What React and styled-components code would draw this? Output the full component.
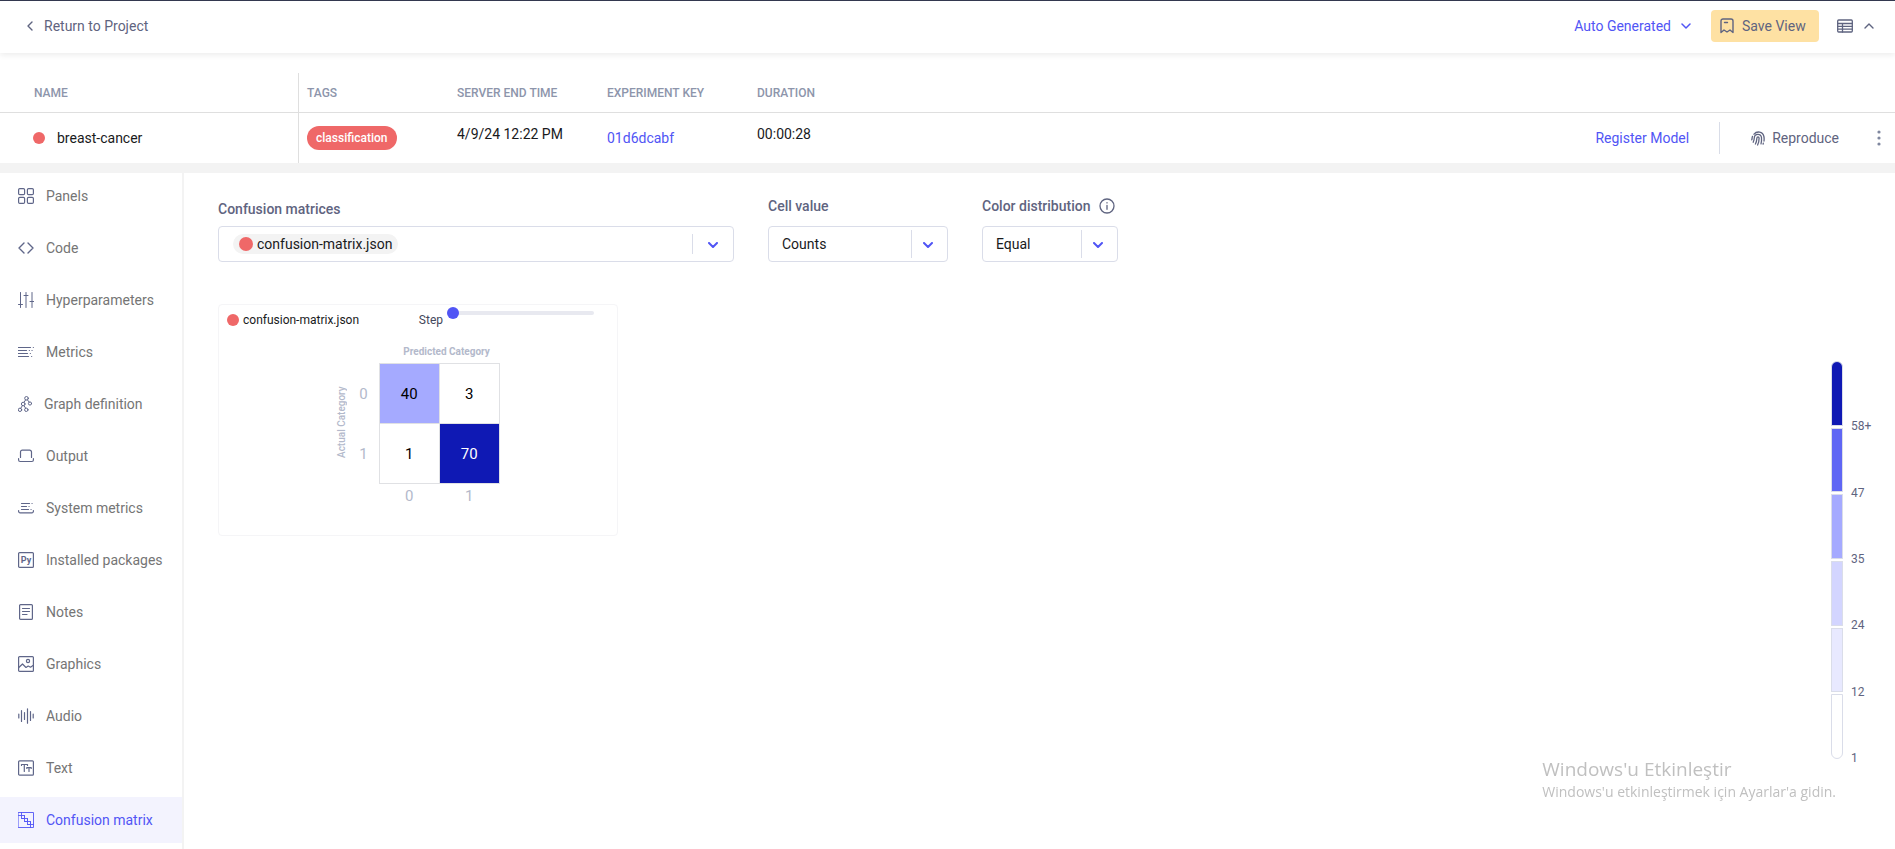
import { useState } from 'react';
import styled, { createGlobalStyle, css } from 'styled-components';

const GlobalStyle = createGlobalStyle`
  * {
    box-sizing: border-box;
  }
  body {
    margin: 0;
    background: #ffffff;
    color: #191a1c;
    font-family: Roboto, 'Liberation Sans', sans-serif;
    font-size: 14px;
    line-height: 20px;
  }
  button, input, select {
    font: inherit;
    color: inherit;
  }
`;

const Page = styled.div`
  display: flex;
  flex-direction: column;
  min-height: 100vh;
`;

const TopBar = styled.header`
  display: flex;
  justify-content: space-between;
  align-items: center;
  height: 53px;
  padding: 0 21px 2px 27px;
  border-top: 1px solid #33384f;
  box-shadow: 0 2px 6px rgba(0, 0, 0, 0.08);
`;

const BackLink = styled.a`
  display: flex;
  align-items: center;
  gap: 11px;
  color: #5f6480;
  text-decoration: none;
`;

const TopActions = styled.div`
  display: flex;
  align-items: center;
`;

const PlainButton = styled.button`
  display: flex;
  align-items: center;
  gap: ${({ $gap }) => $gap || 8}px;
  padding: 0;
  border: none;
  background: none;
  color: ${({ $primary }) => ($primary ? '#5155f5' : '#5f6480')};
  cursor: pointer;
`;

const SaveButton = styled(PlainButton)`
  height: 32px;
  min-width: 108px;
  margin: 0 18px 0 20px;
  padding: 0 12px 0 9px;
  border-radius: 4px;
  background: #fee1a3;
`;

const TableWrap = styled.div`
  padding-top: 20px;
  border-bottom: 10px solid #f3f3f3;
`;

const Table = styled.table`
  width: 100%;
  table-layout: fixed;
  border-collapse: separate;
  border-spacing: 0;
`;

const HeadCell = styled.th`
  width: ${({ $width }) => $width || 'auto'};
  height: 40px;
  padding: 0 8px;
  border-bottom: 1px solid #dfdfdf;
  color: #8d95ab;
  font-size: 12px;
  font-weight: 500;
  text-align: left;
  text-transform: uppercase;
  &:first-child {
    padding-left: 34px;
    border-right: 1px solid #dfdfdf;
  }
`;

const Cell = styled.td`
  height: 50px;
  padding: ${({ $top }) => ($top ? '11px 8px' : '0 8px')};
  vertical-align: ${({ $top }) => ($top ? 'top' : 'middle')};
  &:first-child {
    padding-left: 33px;
    border-right: 1px solid #dfdfdf;
  }
`;

const Inline = styled.div`
  display: flex;
  align-items: center;
  gap: ${({ $gap }) => $gap}px;
`;

const Dot = styled.span`
  flex: none;
  width: ${({ $size }) => $size || 12}px;
  height: ${({ $size }) => $size || 12}px;
  border-radius: 50%;
  background: #ef6868;
`;

const Tag = styled.span`
  display: inline-block;
  padding: 0 9px;
  border-radius: 12px;
  background: #ef6868;
  color: #ffffff;
  font-size: 12px;
  font-weight: 500;
  line-height: 24px;
  vertical-align: middle;
`;

const KeyLink = styled.a`
  color: #5155f5;
  text-decoration: none;
`;

const RowActions = styled.div`
  display: flex;
  justify-content: flex-end;
  align-items: center;
  padding-right: 6px;
`;

const Separator = styled.span`
  width: 1px;
  height: 32px;
  margin: 0 31px 0 30px;
  background: #d9dde8;
`;

const MoreButton = styled(PlainButton)`
  margin-left: 38px;
`;

const Body = styled.div`
  display: flex;
  flex: 1;
`;

const Sidebar = styled.nav`
  flex: none;
  display: flex;
  flex-direction: column;
  gap: 6px;
  width: 184px;
  border-right: 2px solid #f3f3f3;
`;

const NavItem = styled.a`
  display: flex;
  align-items: center;
  gap: 12px;
  height: 46px;
  padding-left: 18px;
  color: #757575;
  text-decoration: none;
  white-space: nowrap;
  svg {
    flex: none;
    color: #5f6689;
  }
  ${({ $active }) =>
    $active &&
    css`
      background: #f3f3fe;
      color: #5155f5;
      svg {
        color: #5155f5;
      }
    `}
`;

const Main = styled.main`
  flex: 1;
  min-width: 0;
  padding: 23px 34px 0;
`;

const Filters = styled.div`
  display: flex;
  align-items: flex-end;
  gap: 34px;
`;

const Field = styled.div`
  flex: 0 1 ${({ $width }) => $width}px;
  display: flex;
  flex-direction: column;
  gap: ${({ $tight }) => ($tight ? 7 : 10)}px;
`;

const Label = styled.label`
  display: flex;
  align-items: center;
  gap: 8px;
  color: #5f6480;
  font-weight: 500;
  white-space: nowrap;
`;

const controlBox = css`
  width: 100%;
  height: 36px;
  border: 1px solid #dadde9;
  border-radius: 4px;
  background: #ffffff;
  cursor: pointer;
`;

const MultiSelect = styled.button`
  ${controlBox}
  display: flex;
  align-items: center;
  justify-content: space-between;
  padding: 0 0 0 14px;
`;

const Chip = styled.span`
  display: flex;
  align-items: center;
  gap: 4px;
  padding: 0 6px;
  border-radius: 10px;
  background: #f3f3f3;
`;

const SelectBox = styled.div`
  display: grid;
  align-items: center;
  > * {
    grid-area: 1 / 1;
  }
`;

const NativeSelect = styled.select`
  ${controlBox}
  appearance: none;
  padding: 0 50px 1px 13px;
`;

const Indicator = styled.span`
  display: flex;
  justify-content: center;
  align-items: center;
  justify-self: end;
  width: ${({ $wide }) => ($wide ? 41 : 37)}px;
  height: ${({ $wide }) => ($wide ? 20 : 28)}px;
  padding: ${({ $wide }) => ($wide ? '2px 0 0' : '2px 4px 0 0')};
  border-left: 1px solid #dadde9;
  color: #5155f5;
  pointer-events: none;
`;

const Card = styled.section`
  max-width: 400px;
  margin-top: 42px;
  padding: 2px 8px 26px;
  border: 1px solid #f5f5f7;
  border-radius: 4px;
`;

const CardHead = styled.div`
  display: flex;
  justify-content: space-between;
  align-items: flex-start;
  padding-right: 15px;
  font-size: 12px;
  line-height: 26px;
`;

const StepLabel = styled.label`
  display: flex;
  align-items: flex-start;
  gap: 4px;
  color: #44485c;
`;

const Slider = styled.input`
  appearance: none;
  width: 147px;
  height: 12px;
  margin: 0;
  background: none;
  &::-webkit-slider-runnable-track {
    height: 4px;
    border-radius: 2px;
    background: #e8e9f0;
  }
  &::-webkit-slider-thumb {
    appearance: none;
    width: 12px;
    height: 12px;
    margin-top: -4px;
    border-radius: 50%;
    background: #5155f5;
  }
`;

const Plot = styled.div`
  display: flex;
  justify-content: center;
  margin-top: 13px;
  color: #b3b9cb;
`;

const ActualLabel = styled.div`
  height: 120px;
  margin-top: 16px;
  font-size: 10px;
  font-weight: 500;
  line-height: 12px;
  text-align: center;
  writing-mode: vertical-rl;
  transform: rotate(180deg);
`;

const Matrix = styled.table`
  border-collapse: collapse;
  font-size: 15px;
  text-align: center;
  caption {
    padding: 0 0 5px 55px;
    font-size: 10px;
    font-weight: 700;
    line-height: 12px;
    text-align: left;
  }
  th {
    padding: 0;
    font-weight: 400;
  }
  tbody th {
    width: 31px;
  }
  tfoot th {
    height: 25px;
  }
`;

const MatrixCell = styled.td`
  width: 60px;
  height: 60px;
  padding: 0;
  border: 1px solid #e0e1e4;
  background: ${({ $bg }) => $bg};
  color: ${({ $light }) => ($light ? '#ffffff' : '#000000')};
`;

const Legend = styled.aside`
  flex: none;
  display: flex;
  gap: 8px;
  width: 64px;
  height: 398px;
  margin-top: 188px;
  color: #5f6480;
  font-size: 12px;
  line-height: 14px;
`;

const LegendBar = styled.div`
  display: flex;
  flex-direction: column;
  gap: 2px;
  width: 12px;
`;

const LegendStep = styled.div`
  flex: 1;
  border: 1px solid #dadde9;
  background: ${({ $color }) => $color};
  &:first-child {
    border-radius: 6px 6px 0 0;
  }
  &:last-child {
    border-radius: 0 0 6px 6px;
  }
`;

const LegendLabels = styled.div`
  display: flex;
  flex-direction: column;
  height: 398px;
  margin-top: 6px;
`;

const LegendLabel = styled.span`
  flex: 1;
  display: flex;
  align-items: flex-end;
`;

const Watermark = styled.div`
  position: fixed;
  right: 59px;
  bottom: 47px;
  color: #c0c0c0;
  font-family: 'Open Sans', 'Noto Sans', sans-serif;
  font-size: 14px;
  line-height: 20px;
  pointer-events: none;
  strong {
    display: block;
    font-size: 19px;
    font-weight: 400;
    line-height: 26px;
  }
`;

const Svg = ({ w = 16, h = 16, sw = 1.2, children }) => (
  <svg
    width={w}
    height={h}
    viewBox={`0 0 ${w} ${h}`}
    fill="none"
    stroke="currentColor"
    strokeWidth={sw}
    strokeLinecap="round"
    strokeLinejoin="round"
    aria-hidden="true"
  >
    {children}
  </svg>
);

const ChevronDown = ({ sw = 1.5 }) => (
  <Svg w={10} h={6} sw={sw}>
    <path d="M1 1l4 4 4-4" />
  </Svg>
);

const icons = {
  panels: (
    <Svg>
      <rect x="0.6" y="0.6" width="6" height="6" rx="1.2" />
      <rect x="9.4" y="0.6" width="6" height="6" rx="1.2" />
      <rect x="0.6" y="9.4" width="6" height="6" rx="1.2" />
      <rect x="9.4" y="9.4" width="6" height="6" rx="1.2" />
    </Svg>
  ),
  code: (
    <Svg sw={1.4}>
      <path d="M6 3L1 8l5 5M10 3l5 5-5 5" />
    </Svg>
  ),
  sliders: (
    <Svg sw={1}>
      <path d="M2.5 .5v15M8 .5v15M14 .5v15M.5 12.5h4M6 3.5h4M12 9.5h4" />
    </Svg>
  ),
  metrics: (
    <Svg>
      <path d="M.5 3.5h12M15.3 3.5h.1M.5 6.5h8M11.3 6.5h.1M14 6.5h.1M.5 9.5h9M12.3 9.5h.1M.5 12.5h10M13.6 12.5h.1" />
    </Svg>
  ),
  graph: (
    <Svg w={14} sw={1}>
      <circle cx="8.5" cy="2.3" r="1.8" />
      <circle cx="5.2" cy="8" r="1.8" />
      <circle cx="12" cy="7.5" r="1.6" />
      <circle cx="2" cy="13.8" r="1.7" />
      <circle cx="8.3" cy="13.8" r="1.7" />
      <path d="M7.6 3.9L6 6.4M9.4 3.9l1.8 2.2M4.4 9.6l-1.6 2.6M6 9.6l1.6 2.6" />
    </Svg>
  ),
  output: (
    <Svg>
      <path d="M2.5 9.5V4a1.8 1.8 0 0 1 1.8-1.8h7.4A1.8 1.8 0 0 1 13.5 4v5.5M.6 10.5V12a1.5 1.5 0 0 0 1.5 1.5h11.8a1.5 1.5 0 0 0 1.5-1.5v-1.5" />
    </Svg>
  ),
  system: (
    <Svg>
      <path d="M3.5 3.5h8M14 3.5h.1M3.5 6.5h5M11 6.5h.1M3.5 9.5h7M13 9.5h.1M.6 10.5v.8a1.5 1.5 0 0 0 1.5 1.5h11.8a1.5 1.5 0 0 0 1.5-1.5v-.8" />
    </Svg>
  ),
  packages: (
    <Svg>
      <rect x="0.6" y="0.6" width="14.8" height="14.8" rx="1" />
      <text x="8" y="10.5" fontSize="9" fontWeight="700" textAnchor="middle" fill="currentColor" stroke="none">
        Py
      </text>
    </Svg>
  ),
  notes: (
    <Svg>
      <rect x="1.6" y="0.6" width="12.8" height="14.8" rx="1" />
      <path d="M4.5 4.5h7M4.5 7.5h7M4.5 10.5H9" />
    </Svg>
  ),
  graphics: (
    <Svg>
      <rect x="0.6" y="0.6" width="14.8" height="14.8" rx="1" />
      <circle cx="10" cy="5" r="1.6" />
      <path d="M.8 11.5L4.500 8 8 11.500l2.200-1.500 2.300 1.200L15 9.500" />
    </Svg>
  ),
  audio: (
    <Svg>
      <path d="M.8 6v4M3.5 2.5v11M6.5 4.5v7M9.5 .8v14.4M12.5 3.5v9M15.2 6v4" />
    </Svg>
  ),
  text: (
    <Svg>
      <rect x="0.6" y="0.8" width="14.8" height="14.4" rx="1" />
      <path d="M3.5 5.500v-1h6v1M6.300 4.500v7M8.800 8.500v-.9h4.400v.9M11 7.600v3.900" />
    </Svg>
  ),
  confusion: (
    <Svg sw={0.9}>
      <rect x="0.5" y="0.5" width="15" height="15" />
      <path d="M.5 3.5h6v3h3v3h3v3h3M3.5 .5v6h3v3h3v3h3v3M6.5 3.5v3h-3M9.5 6.5v3h-3M12.5 9.5v3h-3" />
    </Svg>
  ),
};

const Fingerprint = () => (
  <Svg w={14} h={15} sw={1.3}>
    <path d="M.8 8.800C1.200 7.600 1 6.500 1.500 5.300M3 3.200C5.800-.2 11.800.2 12.900 5.500c.3 1.500.3 3 .1 4.500" />
    <path d="M2.200 11.200c.8-1.500 1-3 1.100-4.500.3-4.300 6.700-4.500 7.200-.1.200 2.200 0 4.200-.5 6.200" />
    <path d="M4.400 13c1.200-2 1.400-3.900 1.500-6 .1-1.400 2.100-1.400 2.200 0 0 2.500-.4 4.800-1.500 7M12.300 12.200l-.2.900" />
  </Svg>
);

const navItems = [
  { label: 'Panels', icon: 'panels' },
  { label: 'Code', icon: 'code' },
  { label: 'Hyperparameters', icon: 'sliders' },
  { label: 'Metrics', icon: 'metrics' },
  { label: 'Graph definition', icon: 'graph' },
  { label: 'Output', icon: 'output' },
  { label: 'System metrics', icon: 'system' },
  { label: 'Installed packages', icon: 'packages' },
  { label: 'Notes', icon: 'notes' },
  { label: 'Graphics', icon: 'graphics' },
  { label: 'Audio', icon: 'audio' },
  { label: 'Text', icon: 'text' },
  { label: 'Confusion matrix', icon: 'confusion' },
];

const legend = [
  { color: '#0f19b4', label: '58+' },
  { color: '#5f66f4', label: '47' },
  { color: '#a5aaff', label: '35' },
  { color: '#d3d5ff', label: '24' },
  { color: '#e8e9ff', label: '12' },
  { color: '#ffffff', label: '1' },
];

const matrix = [
  [{ value: 40, bg: '#a5aaff' }, { value: 3 }],
  [{ value: 1 }, { value: 70, bg: '#0f19b4', light: true }],
];

const Header = () => (
  <TopBar>
    <BackLink href="#project">
      <Svg w={6} h={10} sw={1.4}>
        <path d="M5 1L1 5l4 4" />
      </Svg>
      Return to Project
    </BackLink>
    <TopActions>
      <PlainButton type="button" $primary $gap={10}>
        Auto Generated <ChevronDown />
      </PlainButton>
      <SaveButton type="button">
        <Svg w={14} sw={1.4}>
          <path d="M1 14V3a2 2 0 0 1 2-2h8a2 2 0 0 1 2 2v11.5l-3-2.5-3 2-3-2-3 2.5zM4.5 4.5h3" />
        </Svg>
        Save View
      </SaveButton>
      <PlainButton type="button" $gap={11} aria-label="Table options">
        <Svg h={14} sw={1.3}>
          <rect x="0.7" y="1" width="14.6" height="12" rx="1" />
          <path d="M.7 4.500h14.600M.7 7.300h14.600M.7 10.200h14.600M5.500 4.500V13" />
        </Svg>
        <Svg w={10} h={6} sw={1.4}>
          <path d="M1 5l4-4 4 4" />
        </Svg>
      </PlainButton>
    </TopActions>
  </TopBar>
);

const ExperimentTable = () => (
  <TableWrap>
    <Table>
      <thead>
        <tr>
          <HeadCell $width="299px">Name</HeadCell>
          <HeadCell $width="150px">Tags</HeadCell>
          <HeadCell $width="150px">Server end time</HeadCell>
          <HeadCell $width="150px">Experiment key</HeadCell>
          <HeadCell $width="150px">Duration</HeadCell>
          <HeadCell aria-label="Actions" />
        </tr>
      </thead>
      <tbody>
        <tr>
          <Cell>
            <Inline $gap={12}>
              <Dot />
              breast-cancer
            </Inline>
          </Cell>
          <Cell>
            <Tag>classification</Tag>
          </Cell>
          <Cell $top>4/9/24 12:22 PM</Cell>
          <Cell>
            <KeyLink href="#experiment">01d6dcabf</KeyLink>
          </Cell>
          <Cell $top>00:00:28</Cell>
          <Cell>
            <RowActions>
              <PlainButton type="button" $primary>
                Register Model
              </PlainButton>
              <Separator />
              <PlainButton type="button" $gap={7}>
                <Fingerprint />
                Reproduce
              </PlainButton>
              <MoreButton type="button" aria-label="More actions">
                <svg width="4" height="16" fill="#7f879f" aria-hidden="true">
                  <circle cx="2" cy="2" r="1.6" />
                  <circle cx="2" cy="8" r="1.6" />
                  <circle cx="2" cy="14" r="1.6" />
                </svg>
              </MoreButton>
            </RowActions>
          </Cell>
        </tr>
      </tbody>
    </Table>
  </TableWrap>
);

const Dropdown = ({ id, options }) => (
  <SelectBox>
    <NativeSelect id={id} defaultValue={options[0]}>
      {options.map((o) => (
        <option key={o}>{o}</option>
      ))}
    </NativeSelect>
    <Indicator>
      <ChevronDown sw={2} />
    </Indicator>
  </SelectBox>
);

const MatrixCard = () => {
  const [step, setStep] = useState(0);

  return (
    <Card>
      <CardHead>
        <Inline $gap={4}>
          <Dot />
          confusion-matrix.json
        </Inline>
        <StepLabel>
          Step
          <Slider type="range" min="0" max="10" value={step} onChange={(e) => setStep(e.target.value)} />
        </StepLabel>
      </CardHead>
      <Plot>
        <ActualLabel>Actual Category</ActualLabel>
        <Matrix>
          <caption>Predicted Category</caption>
          <tbody>
            {matrix.map((row, i) => (
              <tr key={i}>
                <th scope="row">{i}</th>
                {row.map((cell) => (
                  <MatrixCell key={cell.value} $bg={cell.bg} $light={cell.light}>
                    {cell.value}
                  </MatrixCell>
                ))}
              </tr>
            ))}
          </tbody>
          <tfoot>
            <tr>
              <td />
              <th scope="col">0</th>
              <th scope="col">1</th>
            </tr>
          </tfoot>
        </Matrix>
      </Plot>
    </Card>
  );
};

const App = () => (
  <Page>
    <GlobalStyle />
    <Header />
    <ExperimentTable />
    <Body>
      <Sidebar>
        {navItems.map(({ label, icon }) => (
          <NavItem key={icon} href={`#${icon}`} $active={icon === 'confusion'}>
            {icons[icon]}
            {label}
          </NavItem>
        ))}
      </Sidebar>
      <Main>
        <Filters>
          <Field $width={516} $tight>
            <Label htmlFor="matrices">Confusion matrices</Label>
            <MultiSelect id="matrices" type="button" aria-haspopup="listbox">
              <Chip>
                <Dot $size={14} />
                confusion-matrix.json
              </Chip>
              <Indicator $wide>
                <ChevronDown sw={2} />
              </Indicator>
            </MultiSelect>
          </Field>
          <Field $width={180}>
            <Label htmlFor="cell-value">Cell value</Label>
            <Dropdown id="cell-value" options={['Counts', 'Percent by row', 'Percent by column']} />
          </Field>
          <Field $width={136}>
            <Label htmlFor="distribution">
              Color distribution
              <Svg sw={1.3}>
                <circle cx="8" cy="8" r="7" />
                <path d="M8 7.3v4M8 4.600v.3" />
              </Svg>
            </Label>
            <Dropdown id="distribution" options={['Equal', 'Smart']} />
          </Field>
        </Filters>
        <MatrixCard />
      </Main>
      <Legend>
        <LegendBar>
          {legend.map(({ color }) => (
            <LegendStep key={color} $color={color} />
          ))}
        </LegendBar>
        <LegendLabels>
          {legend.map(({ label }) => (
            <LegendLabel key={label}>{label}</LegendLabel>
          ))}
        </LegendLabels>
      </Legend>
    </Body>
    <Watermark>
      <strong>Windows'u Etkinleştir</strong>
      Windows'u etkinleştirmek için Ayarlar'a gidin.
    </Watermark>
  </Page>
);

export default App;
